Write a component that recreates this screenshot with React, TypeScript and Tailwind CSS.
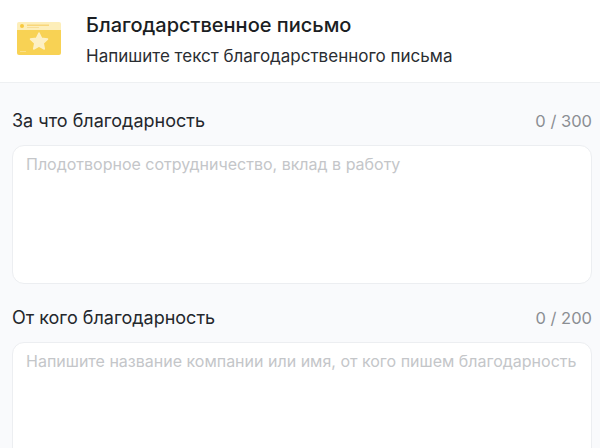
function FolderIcon() {
    return (
        <svg width="44" height="33" viewBox="0 0 44 33" className="shrink-0">
            <path d="M2 0h40a2 2 0 0 1 2 2v7H0V2a2 2 0 0 1 2-2z" fill="#fdeeb9" />
            <path d="M0 8h44v23a2 2 0 0 1-2 2H2a2 2 0 0 1-2-2z" fill="#f8d254" />
            <circle cx="5" cy="4" r="2" fill="#f8c93f" />
            <rect x="10" y="2.500" width="22" height="1.500" fill="#f8d67a" />
            <rect x="10" y="5" width="12" height="1" fill="#f8dd94" />
            <path
                d="M22 11l2.600 5.300 5.900.8-4.300 4.100 1.100 5.800-5.300-2.800-5.300 2.800 1.100-5.800-4.300-4.100 5.900-.8z"
                fill="#fdf0c4"
                stroke="#fdf0c4"
                strokeWidth="1.500"
                strokeLinejoin="round"
            />
            <rect x="3" y="29" width="6" height="1" fill="#fbe08a" />
        </svg>
    );
}

function Field({ label, max, placeholder }: { label: string; max: number; placeholder: string }) {
    return (
        <div>
            <div className="flex items-center justify-between">
                <span className="text-[18px] leading-6 text-[#24272c]">{label}</span>
                <span className="text-[16.500px] leading-6 text-[#8b8e93]">0 / {max}</span>
            </div>
            <div className="mt-[12px] h-[139px] rounded-xl border border-[#eceef1] bg-white px-[13px] py-[8px] text-[16px] leading-[20px] whitespace-nowrap text-[#c4c6c9]">
                {placeholder}
            </div>
        </div>
    );
}

export default function App() {
    return (
        <div className="h-[448px] w-[600px] overflow-hidden bg-[#f9fafc] font-['Inter',sans-serif]">
            <header className="flex h-[83px] items-start gap-[25px] border-b border-[#eef0f2] bg-white pt-[22px] pl-[17px]">
                <FolderIcon />
                <div className="-mt-[10px]">
                    <h1 className="text-[20px] leading-[26px] font-medium text-[#1b1e23]">Благодарственное письмо</h1>
                    <p className="mt-[5px] text-[17px] leading-[26px] text-[#2a2d32]">
                        Напишите текст благодарственного письма
                    </p>
                </div>
            </header>
            <main className="flex flex-col gap-[22px] pt-[26px] pr-[8px] pl-[12px]">
                <Field label="За что благодарность" max={300} placeholder="Плодотворное сотрудничество, вклад в работу" />
                <Field
                    label="От кого благодарность"
                    max={200}
                    placeholder="Напишите название компании или имя, от кого пишем благодарность"
                />
            </main>
        </div>
    );
}
